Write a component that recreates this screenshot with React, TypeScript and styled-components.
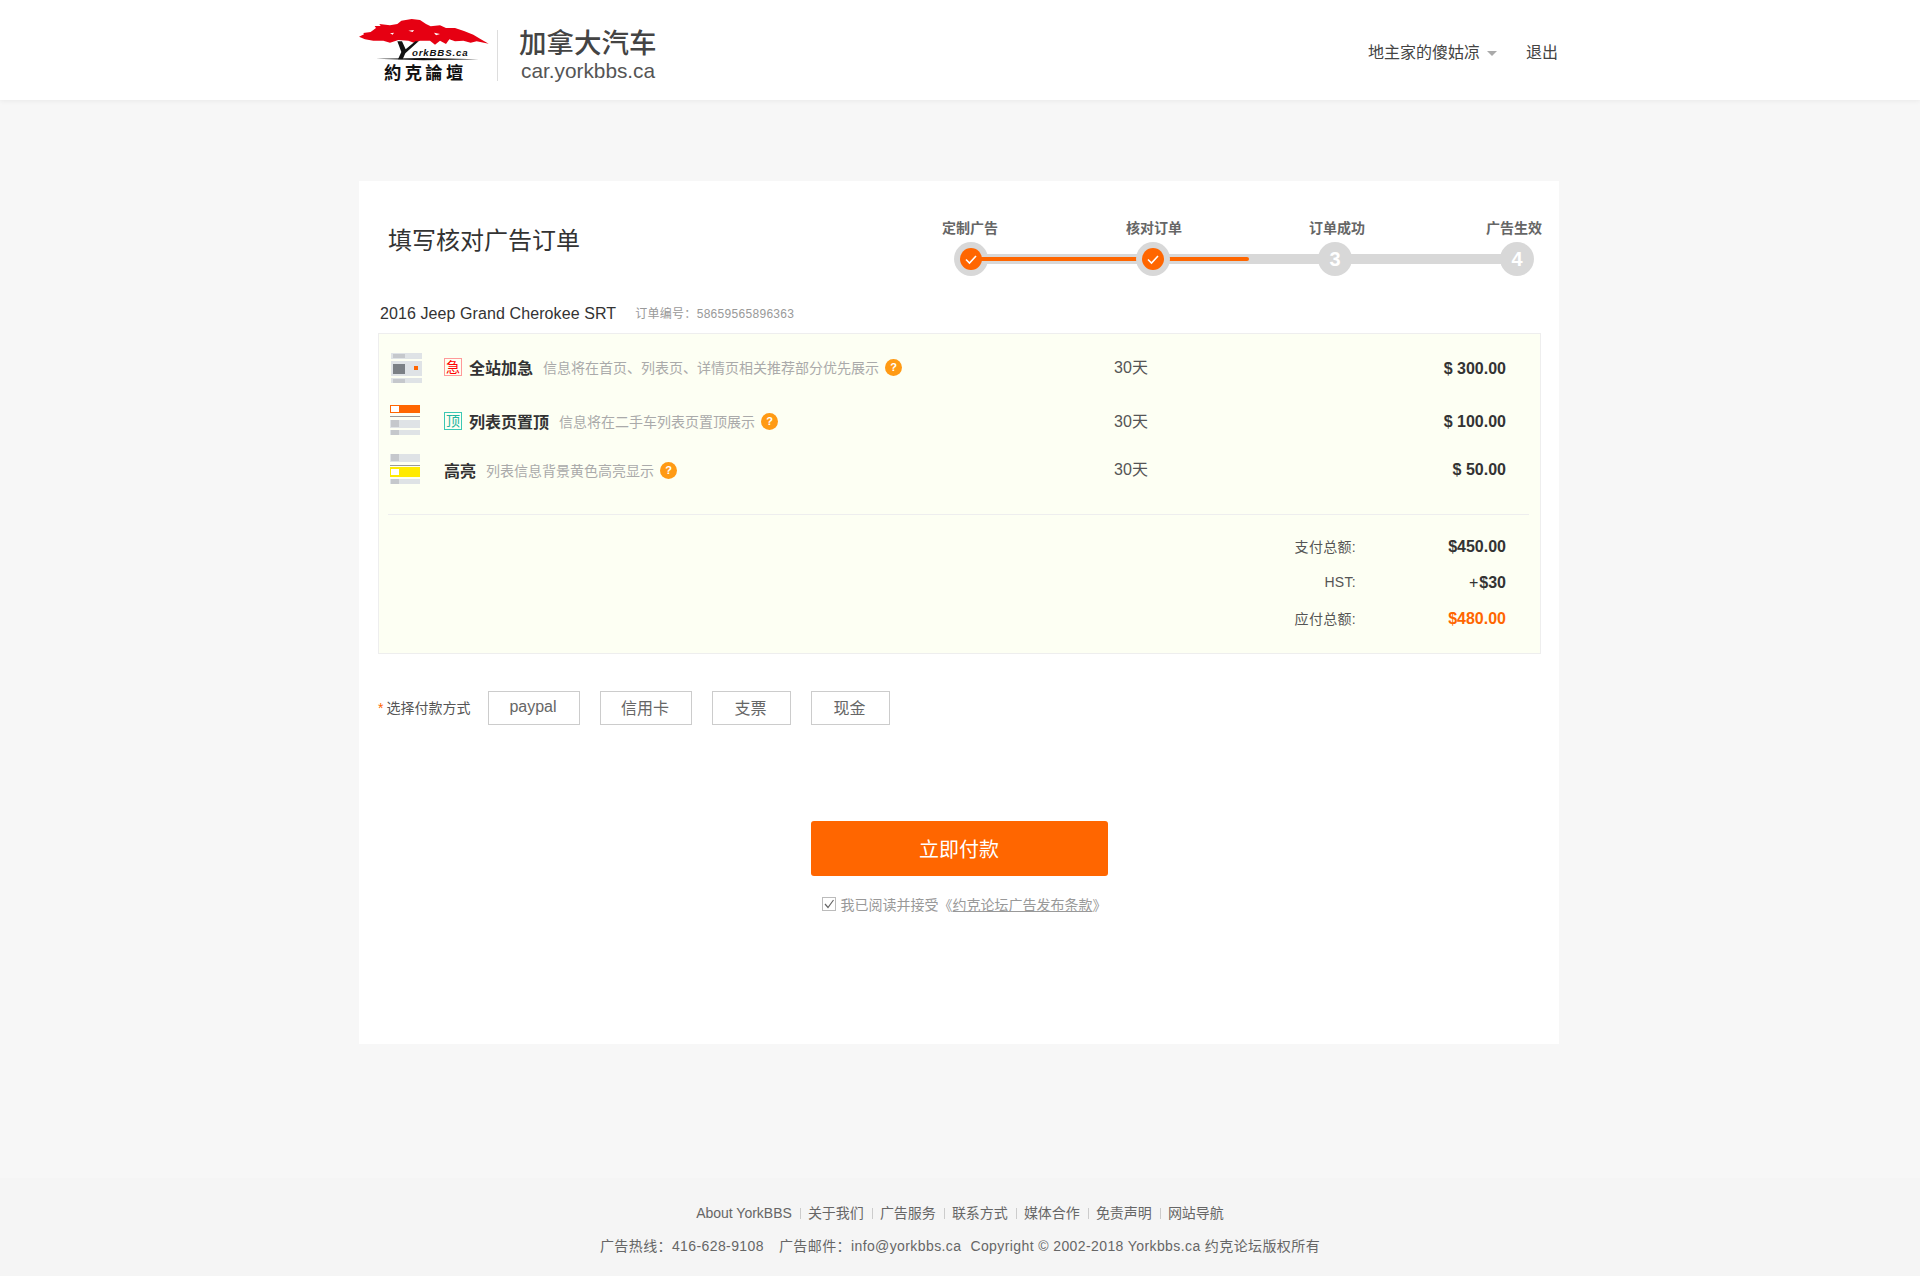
import React from 'react'
import styled, { createGlobalStyle } from 'styled-components'

const FONT = `"Liberation Sans", "Noto Sans CJK SC", sans-serif`
const ORANGE = '#ff6600'

const GlobalStyle = createGlobalStyle`
    html, body {
        margin: 0;
        padding: 0;
    }

    body {
        background: #f7f7f7;
        font-family: ${FONT};
        color: #333;
    }

    * {
        box-sizing: border-box;
    }
`

const Header = styled.header`
    height: 100px;
    background: #fff;
    box-shadow: 0 1px 5px rgba(0, 0, 0, 0.06);
`

const HeaderInner = styled.div`
    width: 1200px;
    margin-left: 359px;
    display: flex;
    align-items: flex-start;
`

const LogoMark = styled.svg`
    width: 130px;
    height: 70px;
    margin-top: 15px;
    flex: none;
`

const LogoDivider = styled.div`
    width: 1px;
    height: 51px;
    margin: 30px 0 0 8px;
    background: #ddd;
`

const SiteName = styled.div`
    margin: 28px 0 0 21px;
    color: #444;

    strong {
        display: block;
        font-size: 27.5px;
        line-height: 31px;
        font-weight: 500;
        white-space: nowrap;
    }

    span {
        display: block;
        margin-left: 2px;
        font-size: 20.8px;
        line-height: 24px;
        color: #555;
    }
`

const Nav = styled.nav`
    margin: 41px 1px 0 auto;
    display: flex;
    align-items: center;
    font-size: 16px;
    line-height: 24px;
    color: #444;
`

const Caret = styled.i`
    width: 0;
    height: 0;
    margin: 0 29px 0 7px;
    border-left: 5px solid transparent;
    border-right: 5px solid transparent;
    border-top: 5px solid #aaa;
`

const Card = styled.main`
    width: 1200px;
    height: 863px;
    margin: 81px 0 0 359px;
    padding: 37px 19px 0;
    background: #fff;
`

const TitleRow = styled.div`
    display: flex;
    justify-content: space-between;
    align-items: flex-start;
`

const Title = styled.h1`
    margin: 7px 0 0 10px;
    font-size: 24px;
    line-height: 32px;
    font-weight: 400;
    color: #333;
`

const Steps = styled.div`
    width: 600px;
    margin-right: -2px;
`

const StepLabels = styled.div`
    display: grid;
    grid-template-columns: 184px 183px 177px 56px;
    font-size: 14px;
    line-height: 20px;
    font-weight: 700;
    color: #666;
`

const StepTrack = styled.div`
    position: relative;
    width: 580px;
    margin: 4px 0 0 12px;
    display: flex;
    justify-content: space-between;

    &::before {
        content: '';
        position: absolute;
        left: 17px;
        right: 17px;
        top: 12px;
        height: 10px;
        background: #d8d8d8;
    }
`

const TrackFill = styled.div`
    position: absolute;
    left: 17px;
    top: 15px;
    height: 4px;
    border-radius: 2px;
    background: ${ORANGE};
`

const StepDot = styled.div<{ $underFill?: boolean }>`
    position: ${p => (p.$underFill ? 'static' : 'relative')};
    width: 34px;
    height: 34px;
    border-radius: 50%;
    background: #d8d8d8;
    display: flex;
    align-items: center;
    justify-content: center;
    color: #fff;
    font-size: 20px;
    font-weight: 700;
`

const StepCheck = styled.div`
    position: relative;
    width: 22px;
    height: 22px;
    border-radius: 50%;
    background: ${ORANGE};
    display: flex;
    align-items: center;
    justify-content: center;
`

const CarLine = styled.div`
    margin: 26px 0 0 2px;
    display: flex;
    align-items: center;
    height: 24px;
    line-height: 24px;
    font-size: 16px;
    letter-spacing: 0.09px;
    color: #333;

    small {
        margin-left: 19px;
        font-size: 12px;
        letter-spacing: 0.3px;
        color: #999;
    }
`

const OrderBox = styled.section`
    margin: 7px -1px 0 0;
    height: 321px;
    border: 1px solid #eee;
    background: #fdfff3;
    padding: 19px 34px 0 11px;
`

const OrderRow = styled.div<{ $top: number }>`
    margin-top: ${p => p.$top}px;
    height: 30px;
    display: grid;
    grid-template-columns: 54px 1fr 142px 304px;
    align-items: center;
`

const RowIcon = styled.svg`
    width: 31px;
    height: 30px;
    display: block;
    overflow: visible;
`

/* margin-top in a centred grid cell moves the cell by half the value */
const RowInfo = styled.div<{ $dy: number }>`
    margin-top: ${p => p.$dy * 2}px;
    display: flex;
    align-items: center;
    white-space: nowrap;
`

const Tag = styled.span<{ $color: string; $border: string }>`
    width: 18px;
    height: 18px;
    margin-right: 7px;
    border: 1px solid ${p => p.$border};
    color: ${p => p.$color};
    font-size: 14px;
    line-height: 16px;
    text-align: center;
    flex: none;
`

const RowName = styled.b`
    font-size: 16px;
    font-weight: 700;
    color: #333;
`

const RowDesc = styled.span`
    margin-left: 10px;
    font-size: 14px;
    color: #aaa;
`

const HelpDot = styled.span`
    width: 17px;
    height: 17px;
    margin-left: 6px;
    border-radius: 50%;
    background: #ff9a14;
    color: #fff;
    font-size: 11px;
    font-weight: 700;
    line-height: 17px;
    text-align: center;
    flex: none;
`

const RowDays = styled.div<{ $dy: number }>`
    margin-top: ${p => p.$dy * 2}px;
    font-size: 16px;
    color: #555;
    text-align: center;
`

const RowPrice = styled.div<{ $dy: number }>`
    margin-top: ${p => p.$dy * 2}px;
    font-size: 16px;
    font-weight: 700;
    color: #333;
    text-align: right;
`

const Divider = styled.hr`
    margin: 30px -23px 0 -2px;
    border: 0;
    border-top: 1px solid #eee;
`

const Summary = styled.div`
    margin: 14px 0 0 0;
`

const SummaryRow = styled.div`
    height: 36px;
    display: flex;
    justify-content: flex-end;
    align-items: center;
    font-size: 14px;
    color: #555;
`

const SummaryLabel = styled.span`
    margin-top: -2px;
    letter-spacing: 0.3px;
`

const SummaryValue = styled.span<{ $accent?: boolean }>`
    width: 150px;
    text-align: right;
    font-size: 16px;
    font-weight: 700;
    color: ${p => (p.$accent ? ORANGE : '#333')};

    em {
        margin-right: 1px;
        font-style: normal;
        font-weight: 400;
    }
`

const PayRow = styled.div`
    margin-top: 37px;
    display: flex;
    align-items: center;
`

const PayLabel = styled.div`
    width: 110px;
    margin-top: -2px;
    font-size: 14px;
    color: #555;

    i {
        margin-right: 3px;
        font-style: normal;
        color: ${ORANGE};
    }
`

const PayOptions = styled.div`
    display: flex;
    gap: 20px;
`

const PayOption = styled.button<{ $wide?: boolean }>`
    width: ${p => (p.$wide ? 92 : 79)}px;
    height: 34px;
    padding: 0 2px 2px 0;
    border: 1px solid #ccc;
    background: #fff;
    font-family: ${FONT};
    font-size: 16px;
    color: #666;
`

const Submit = styled.button`
    display: block;
    width: 297px;
    height: 55px;
    margin: 96px auto 0;
    border: 0;
    border-radius: 3px;
    background: ${ORANGE};
    color: #fff;
    font-family: ${FONT};
    font-size: 20px;
`

const Agree = styled.div`
    margin: 18px 0 0 10px;
    display: flex;
    justify-content: center;
    align-items: center;
    height: 20px;
    font-size: 14px;
    color: #999;

    a {
        color: #999;
        text-decoration: underline;
    }
`

const CheckBox = styled.svg`
    width: 14px;
    height: 14px;
    margin-right: 5px;
`

const Footer = styled.footer`
    margin-top: 134px;
    height: 98px;
    padding-top: 25px;
    background: #f5f5f5;
    font-size: 14px;
    line-height: 20px;
    color: #666;
    text-align: center;
`

const FooterLinks = styled.div`
    display: flex;
    justify-content: center;

    a + a {
        margin-left: 8px;
        padding-left: 8px;
        background: linear-gradient(#ccc, #ccc) left center / 1px 11px no-repeat;
    }
`

const FooterInfo = styled.div`
    margin-top: 13px;
    display: flex;
    justify-content: center;
    gap: 15px;
    white-space: nowrap;
    letter-spacing: 0.4px;

    span:last-child {
        margin-left: -6px;
    }
`

const Logo = () => (
    <LogoMark viewBox="57 45 390 210">
        <path
            fill="#e60012"
            d="M57 110 L72 103 L70 99 L92 96 L108 84 L104 78 L122 78 L118 72 L150 76 L172 72 L184 62 L215 57 L240 60 L258 72 L272 79 L300 76 L318 84 L345 84 L372 93 L400 104 L420 116 L446 131 L410 124 L392 128 L370 122 L345 124 L328 118 L318 132 L300 122 L285 134 L270 122 L240 122 L222 128 L205 122 L175 120 L150 128 L130 122 L100 122 L75 118 Z"
        />
        <path fill="#fff" d="M205 92 L222 90 L218 96 Z M282 98 L300 102 L288 106 Z M150 100 L162 98 L158 104 Z" />
        <path fill="#111" d="M172 124 L186 124 L197 148 L226 124 L236 124 L196 160 L188 178 L174 178 L184 156 Z" />
        <path fill="#111" d="M108 176 L250 174 L416 178 L250 181 Z" />
        <text x="216" y="168" fontFamily="Liberation Sans, sans-serif" fontStyle="italic" fontWeight="700" fontSize="29" letterSpacing="2.5" fill="#111">
            orkBBS.ca
        </text>
        <text x="132" y="238" fontFamily="Noto Sans CJK TC, sans-serif" fontWeight="700" fontSize="52" letterSpacing="10" fill="#111">
            約克論壇
        </text>
    </LogoMark>
)

const Check = () => (
    <svg width="14" height="14" viewBox="0 0 14 14" fill="none" stroke="#fff" strokeWidth="1.6">
        <path d="M2 7.5 L5.5 11 L12 4" />
    </svg>
)

const IconBoost = () => (
    <RowIcon viewBox="-1 0 31 30">
        <rect y="0" width="31" height="6" fill="#dfe3e6" />
        <rect x="2" y="1" width="12" height="4" fill="#c5c8cc" />
        <rect y="8" width="31" height="15" fill="#dfe3e6" />
        <rect x="2" y="11" width="12" height="10" fill="#7b8085" />
        <rect x="23" y="13" width="4" height="4" fill={ORANGE} />
        <rect y="25" width="31" height="5" fill="#dfe3e6" />
        <rect x="2" y="26" width="12" height="4" fill="#c5c8cc" />
    </RowIcon>
)

const IconTop = () => (
    <RowIcon viewBox="0 0 31 30">
        <rect width="30" height="8" fill={ORANGE} />
        <rect x="1" y="1" width="8" height="6" fill="#fff" />
        <rect y="11" width="30" height="1" fill="#999" />
        <rect y="15" width="30" height="8" fill="#dfe3e6" />
        <rect x="1" y="15" width="8" height="7" fill="#c5c8cc" />
        <rect y="25" width="30" height="5" fill="#dfe3e6" />
        <rect x="1" y="25" width="8" height="5" fill="#c5c8cc" />
    </RowIcon>
)

const IconHighlight = () => (
    <RowIcon viewBox="0 0 31 30">
        <rect width="30" height="8" fill="#dfe3e6" />
        <rect x="1" width="8" height="7" fill="#c5c8cc" />
        <rect y="11" width="30" height="1" fill="#999" />
        <rect y="13" width="30" height="10" fill="#ffea00" />
        <rect x="1" y="15" width="8" height="6" fill="#fff" />
        <rect y="25" width="30" height="5" fill="#dfe3e6" />
        <rect x="1" y="25" width="8" height="5" fill="#c5c8cc" />
    </RowIcon>
)

const orders = [
    {
        top: 0,
        icon: <IconBoost />,
        tag: { text: '急', color: '#f00', border: '#f99' },
        name: '全站加急',
        desc: '信息将在首页、列表页、详情页相关推荐部分优先展示',
        price: '$ 300.00',
        dy: [-1, -2, 1],
    },
    {
        top: 22,
        icon: <IconTop />,
        tag: { text: '顶', color: '#1fb5a0', border: '#3cc8b4' },
        name: '列表页置顶',
        desc: '信息将在二手车列表页置顶展示',
        price: '$ 100.00',
        dy: [1, 0, 2],
    },
    {
        top: 19,
        icon: <IconHighlight />,
        name: '高亮',
        desc: '列表信息背景黄色高亮显示',
        price: '$ 50.00',
        dy: [1, -1, 1],
    },
]

export default function App() {
    return (
        <>
            <GlobalStyle />
            <Header>
                <HeaderInner>
                    <Logo />
                    <LogoDivider />
                    <SiteName>
                        <strong>加拿大汽车</strong>
                        <span>car.yorkbbs.ca</span>
                    </SiteName>
                    <Nav>
                        地主家的傻姑凉
                        <Caret />
                        退出
                    </Nav>
                </HeaderInner>
            </Header>

            <Card>
                <TitleRow>
                    <Title>填写核对广告订单</Title>
                    <Steps>
                        <StepLabels>
                            <span>定制广告</span>
                            <span>核对订单</span>
                            <span>订单成功</span>
                            <span>广告生效</span>
                        </StepLabels>
                        <StepTrack>
                            <TrackFill style={{ width: 278 }} />
                            <StepDot $underFill><StepCheck><Check /></StepCheck></StepDot>
                            <StepDot><StepCheck><Check /></StepCheck></StepDot>
                            <StepDot>3</StepDot>
                            <StepDot>4</StepDot>
                        </StepTrack>
                    </Steps>
                </TitleRow>

                <CarLine>
                    2016 Jeep Grand Cherokee SRT
                    <small>订单编号：58659565896363</small>
                </CarLine>

                <OrderBox>
                    {orders.map(o => (
                        <OrderRow key={o.name} $top={o.top}>
                            {o.icon}
                            <RowInfo $dy={o.dy[0]}>
                                {o.tag && <Tag $color={o.tag.color} $border={o.tag.border}>{o.tag.text}</Tag>}
                                <RowName>{o.name}</RowName>
                                <RowDesc>{o.desc}</RowDesc>
                                <HelpDot>?</HelpDot>
                            </RowInfo>
                            <RowDays $dy={o.dy[1]}>30天</RowDays>
                            <RowPrice $dy={o.dy[2]}>{o.price}</RowPrice>
                        </OrderRow>
                    ))}
                    <Divider />
                    <Summary>
                        <SummaryRow>
                            <SummaryLabel>支付总额:</SummaryLabel>
                            <SummaryValue>$450.00</SummaryValue>
                        </SummaryRow>
                        <SummaryRow>
                            <SummaryLabel>HST:</SummaryLabel>
                            <SummaryValue><em>+</em>$30</SummaryValue>
                        </SummaryRow>
                        <SummaryRow>
                            <SummaryLabel>应付总额:</SummaryLabel>
                            <SummaryValue $accent>$480.00</SummaryValue>
                        </SummaryRow>
                    </Summary>
                </OrderBox>

                <PayRow>
                    <PayLabel><i>*</i>选择付款方式</PayLabel>
                    <PayOptions>
                        <PayOption $wide>paypal</PayOption>
                        <PayOption $wide>信用卡</PayOption>
                        <PayOption>支票</PayOption>
                        <PayOption>现金</PayOption>
                    </PayOptions>
                </PayRow>

                <Submit>立即付款</Submit>
                <Agree>
                    <CheckBox viewBox="0 0 14 14" fill="none">
                        <rect x="0.5" y="0.5" width="13" height="13" stroke="#bbb" />
                        <path d="M3 7 L6 10.5 L11.5 3" stroke="#666" strokeWidth="1.2" />
                    </CheckBox>
                    我已阅读并接受《<a href="#">约克论坛广告发布条款</a>》
                </Agree>
            </Card>

            <Footer>
                <FooterLinks>
                    <a>About YorkBBS</a>
                    <a>关于我们</a>
                    <a>广告服务</a>
                    <a>联系方式</a>
                    <a>媒体合作</a>
                    <a>免责声明</a>
                    <a>网站导航</a>
                </FooterLinks>
                <FooterInfo>
                    <span>广告热线：416-628-9108</span>
                    <span>广告邮件：info@yorkbbs.ca</span>
                    <span>Copyright © 2002-2018 Yorkbbs.ca 约克论坛版权所有</span>
                </FooterInfo>
            </Footer>
        </>
    )
}
